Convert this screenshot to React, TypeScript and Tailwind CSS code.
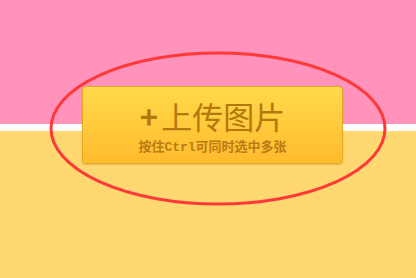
import React from "react";

const UploadButton = () => {
  return (
    <button className="flex w-[261px] h-[78px] flex-col items-center rounded-[4px] border border-[#e3a72a] bg-[linear-gradient(#ffda4c,#ffbb2c)] pt-[13px] shadow-[0_1px_2px_rgba(180,120,20,0.35)]">
      <span className="flex items-center text-[31px] leading-[32px] text-[#b4780c] font-['Noto_Sans_CJK_SC',sans-serif]">
        <span className="mr-[3px] font-bold">+</span>
        上传图片
      </span>
      <span className="mt-[6px] flex items-baseline text-[13px] leading-[16px] font-bold text-[#b97c12] font-['Noto_Sans_CJK_SC',sans-serif]">
        <span>按住</span>
        <span className="font-['Liberation_Mono',monospace]">Ctrl</span>
        <span>可同时选中多张</span>
      </span>
    </button>
  );
};

export default function App() {
  return (
    <div className="relative h-[278px] w-[416px] overflow-hidden bg-[linear-gradient(#ff93bc_0px,#ff93bc_124px,#ffffff_124px,#ffffff_131px,#ffd872_131px,#ffd872_100%)]">
      <div className="pl-[82px] pt-[86px]">
        <UploadButton />
      </div>
      {/* hand-drawn highlight ring */}
      <svg className="pointer-events-none absolute left-0 top-0" width="416" height="278">
        <ellipse cx="218" cy="128.5" rx="167" ry="75.5" fill="none" stroke="#ff3838" strokeWidth="3" />
      </svg>
    </div>
  );
}
